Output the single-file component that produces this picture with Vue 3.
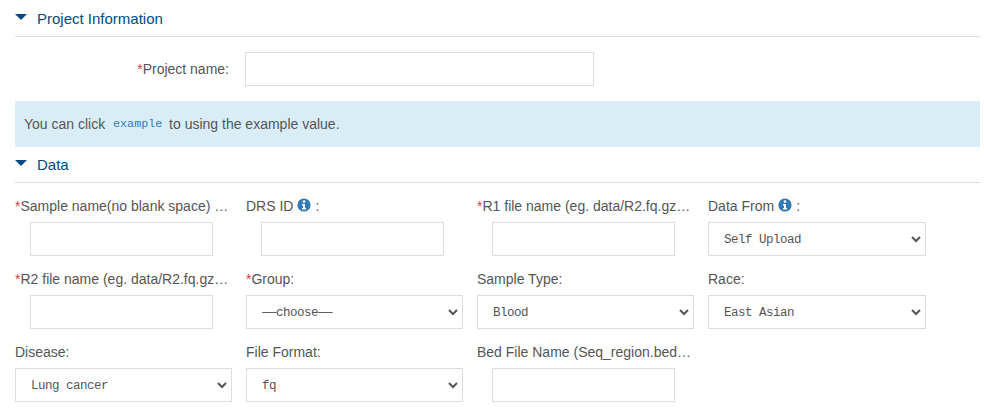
<script setup>
const rows = [
  { label: 'Sample name(no blank space) (required) :', req: true, kind: 'input' },
  { label: 'DRS ID', info: true, kind: 'input' },
  { label: 'R1 file name (eg. data/R2.fq.gz, data/R2.fq) :', req: true, kind: 'input' },
  { label: 'Data From', info: true, kind: 'select', value: 'Self Upload' },
  { label: 'R2 file name (eg. data/R2.fq.gz, data/R2.fq) :', req: true, kind: 'input' },
  { label: 'Group:', req: true, kind: 'select', value: '——choose——' },
  { label: 'Sample Type:', kind: 'select', value: 'Blood' },
  { label: 'Race:', kind: 'select', value: 'East Asian' },
  { label: 'Disease:', kind: 'select', value: 'Lung cancer' },
  { label: 'File Format:', kind: 'select', value: 'fq' },
  { label: 'Bed File Name (Seq_region.bed file, optional) :', kind: 'input' }
]
</script>

<template>
  <div class="page">
    <h4 class="heading">
      <svg class="caret" width="12" height="6" viewBox="0 0 12 6"><path d="M0 0h12L6 6z" fill="#004b85" /></svg>
      Project Information
    </h4>
    <div class="project-row">
      <label class="project-label"><span class="req">*</span>Project name:</label>
      <input class="project-input" type="text" />
    </div>
    <div class="alert">You can click <code class="code">example</code> to using the example value.</div>
    <h4 class="heading heading-data">
      <svg class="caret" width="12" height="6" viewBox="0 0 12 6"><path d="M0 0h12L6 6z" fill="#004b85" /></svg>
      Data
    </h4>
    <div class="grid">
      <div v-for="f in rows" :key="f.label" class="field">
        <div class="label">
          <span class="label-text"><span v-if="f.req" class="req">*</span>{{ f.label }}</span>
          <template v-if="f.info">
            <svg class="info" width="14" height="14" viewBox="0 0 14 14">
              <circle cx="7" cy="7" r="6.6" fill="#337ab7" />
              <circle cx="7" cy="3.6" r="1.3" fill="#fff" />
              <path d="M5 6h3v4h1v1.4H5V10h1V7.4H5z" fill="#fff" />
            </svg>
            <span class="colon">:</span>
          </template>
        </div>
        <input v-if="f.kind === 'input'" class="text-input" type="text" />
        <div v-else class="select-wrap">
          <select class="select">
            <option>{{ f.value }}</option>
          </select>
          <svg class="chevron" width="10" height="7" viewBox="0 0 10 7">
            <path d="M1 1l4 4 4-4" fill="none" stroke="#555" stroke-width="2" />
          </svg>
        </div>
      </div>
    </div>
  </div>
</template>

<style>
html, body { margin: 0; background: #fff; }
</style>

<style scoped>
.page {
  box-sizing: border-box;
  width: 984px;
  height: 414px;
  overflow: hidden;
  padding: 0 4px 0 15px;
  font-family: "Liberation Sans", Arial, sans-serif;
  font-size: 14px;
  color: #555;
}
.heading {
  display: flex;
  align-items: center;
  gap: 10px;
  margin: 0;
  height: 36px;
  border-bottom: 1px solid #ddd;
  font-size: 15px;
  font-weight: 400;
  color: #004b85;
}
.caret { margin-top: -3px; }
.project-row {
  display: flex;
  align-items: center;
  gap: 16px;
  margin-top: 15px;
}
.project-label {
  width: 214px;
  text-align: right;
}
.req { color: #e4393c; }
.project-input, .text-input {
  box-sizing: border-box;
  height: 34px;
  border: 1px solid #ddd;
  background: #fff;
  outline: none;
  padding: 0;
}
.project-input { width: 349px; }
.alert {
  display: flex;
  align-items: center;
  height: 46px;
  box-sizing: border-box;
  margin-top: 15px;
  padding: 0 0 1px 9px;
  background: #d9edf7;
  color: #555;
  white-space: pre;
}
.code {
  font-family: "Liberation Mono", monospace;
  font-size: 11.7px;
  color: #337ab7;
  margin: 0 3px 0 4px;
}
.heading-data { height: 35px; }
.grid {
  display: grid;
  grid-template-columns: 217px 217px 217px 218px;
  column-gap: 14px;
  row-gap: 8px;
  margin-top: 8px;
}
.field { display: flex; flex-direction: column; min-width: 0; }
.label {
  display: flex;
  align-items: center;
  height: 29px;
  margin-bottom: 2px;
  white-space: nowrap;
  color: #555;
}
.label-text {
  max-width: 216px;
  overflow: hidden;
  text-overflow: ellipsis;
}
.info { margin: 0 4px 2px 4px; flex: none; }
.text-input {
  width: 183px;
  margin-left: 15px;
}
.select-wrap { position: relative; height: 34px; }
.select {
  display: block;
  box-sizing: border-box;
  width: 100%;
  height: 34px;
  border: 1px solid #ddd;
  border-radius: 0;
  background: #fff;
  appearance: none;
  padding: 1px 0 0 15px;
  font-family: "Liberation Mono", monospace;
  font-size: 12.5px;
  letter-spacing: -0.5px;
  color: #555;
  outline: none;
}
.chevron {
  position: absolute;
  right: 5px;
  top: 14px;
  pointer-events: none;
}
</style>
